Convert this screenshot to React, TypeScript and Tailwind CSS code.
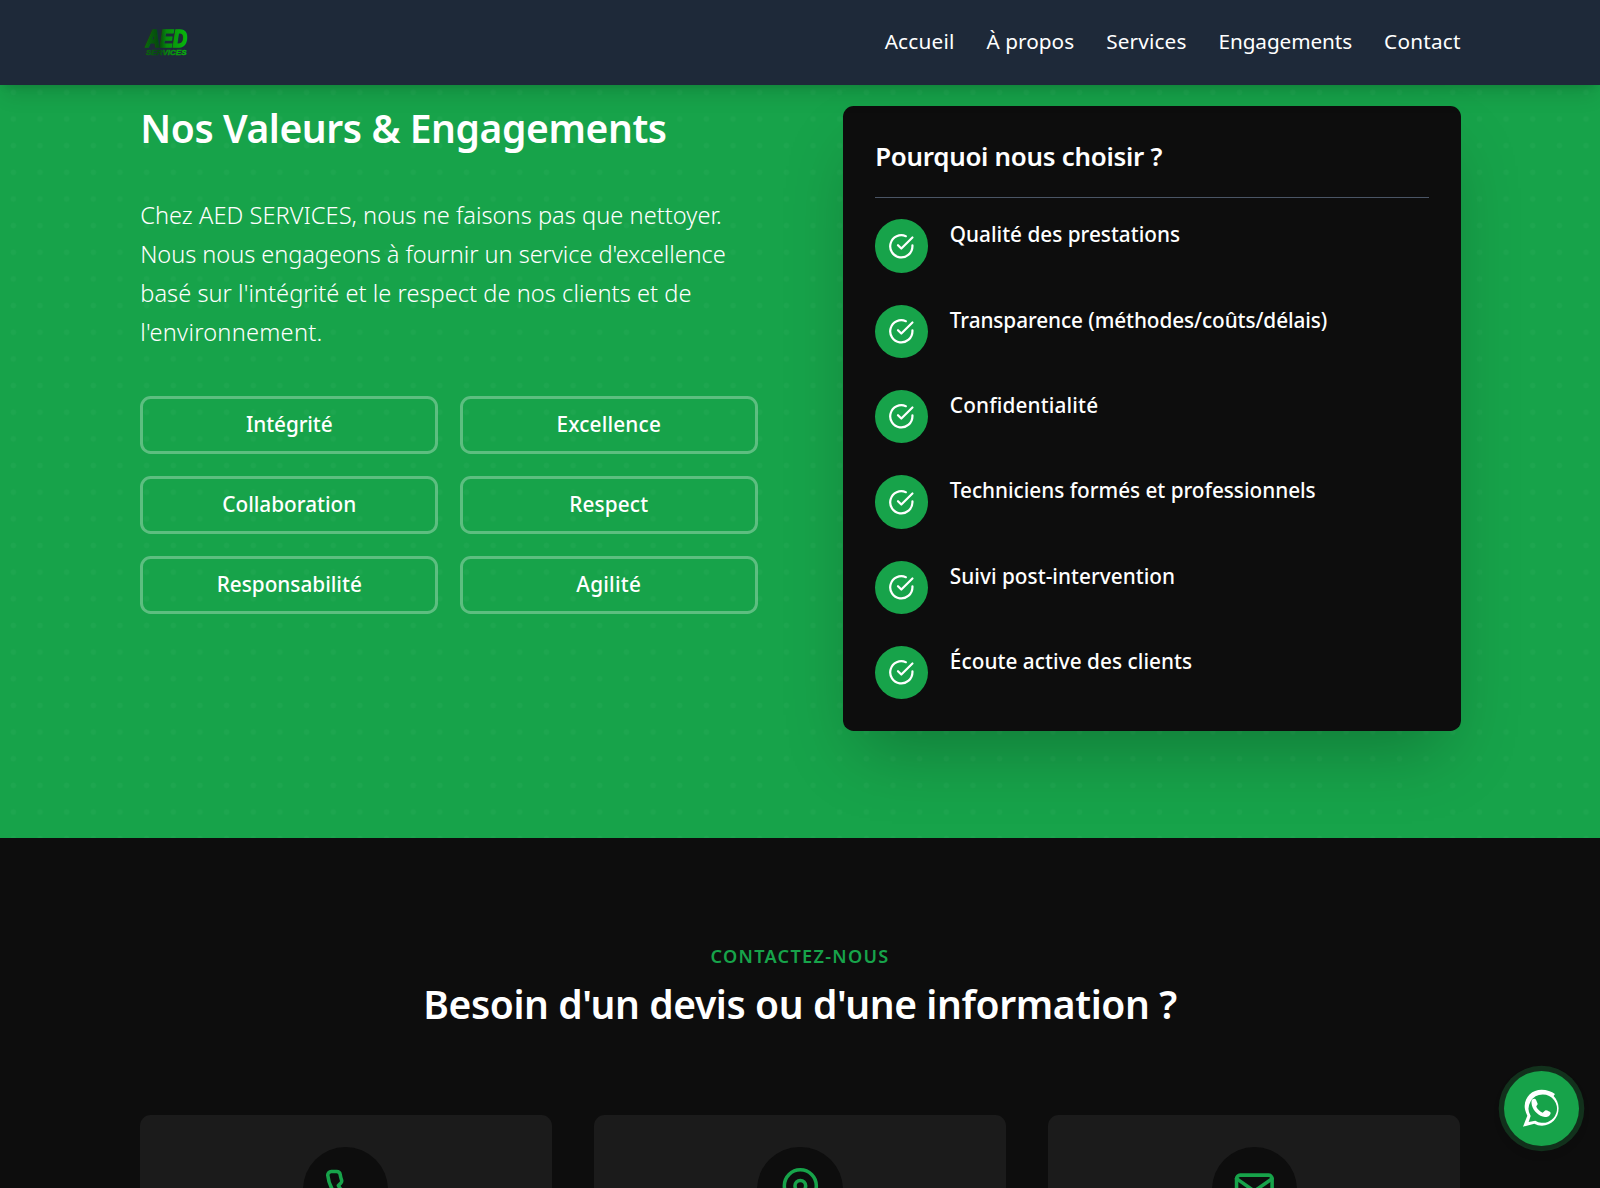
import { FiCheckCircle, FiMail, FiMapPin, FiPhone } from "react-icons/fi";

const navLinks = [
  { label: "Accueil",     href: "#accueil",     tracking: "tracking-[0.22px]"  },
  { label: "À propos",    href: "#apropos",     tracking: "tracking-[0.02px]"  },
  { label: "Services",    href: "#services",    tracking: "tracking-[0.15px]"  },
  { label: "Engagements", href: "#engagements", tracking: "tracking-[-0.09px]" },
  { label: "Contact",     href: "#contact",     tracking: "tracking-[0.2px]"   },
];

const values = [
  { label: "Intégrité",      tracking: "tracking-[-0.1px]" },
  { label: "Excellence",     tracking: "tracking-[0.18px]" },
  { label: "Collaboration",  tracking: "tracking-normal"   },
  { label: "Respect",        tracking: "tracking-[0.15px]" },
  { label: "Responsabilité", tracking: "tracking-normal"   },
  { label: "Agilité",        tracking: "tracking-[0.25px]" },
];

const reasons = [
  { label: "Qualité des prestations",             tracking: "tracking-normal"    },
  { label: "Transparence (méthodes/coûts/délais)", tracking: "tracking-[-0.08px]" },
  { label: "Confidentialité",                     tracking: "tracking-[0.15px]"  },
  { label: "Techniciens formés et professionnels", tracking: "tracking-[-0.02px]" },
  { label: "Suivi post-intervention",             tracking: "tracking-[0.03px]"  },
  { label: "Écoute active des clients",           tracking: "tracking-[0.05px]"  },
];

const contacts = [
  { Icon: FiPhone,  label: "Téléphone" },
  { Icon: FiMapPin, label: "Adresse"   },
  { Icon: FiMail,   label: "Email"     },
];

function Logo() {
  return (
    <svg viewBox="0 0 44 28" className="ml-1 w-11 h-7 overflow-visible" aria-label="AED Services">
      <defs>
        <linearGradient id="logo" gradientUnits="userSpaceOnUse" x1="2" y1="0" x2="43" y2="0">
          <stop offset="0" stopColor="#07680b" />
          <stop offset="0.32" stopColor="#05480c" />
          <stop offset="0.5" stopColor="#078a0b" />
          <stop offset="1" stopColor="#08b80a" />
        </linearGradient>
      </defs>
      <g fill="url(#logo)" stroke="url(#logo)" fontFamily="Liberation Sans, Arial, sans-serif" fontWeight="700" fontStyle="italic">
        <text x="2" y="19" fontSize="23" strokeWidth="1.6" textLength="41" lengthAdjust="spacingAndGlyphs">AED</text>
        <text x="2" y="26.6" fontSize="7.6" strokeWidth="0.4" textLength="40.5" lengthAdjust="spacingAndGlyphs">SERVICES</text>
      </g>
    </svg>
  );
}

function WhatsappIcon() {
  return (
    <svg viewBox="186 148 112 116" fill="currentColor" className="w-[37.3px] h-[38.7px] -ml-[3px]">
      <path
        fillRule="evenodd"
        d="M189 261L202 228C196 216 194 207 194 199C195 170 217 150 245 150C260 150 275 155 285 163L281 169C290 178 296 191 296 206C296 236 274 258 246 258C237 258 230 256 223 252ZM248.5 164.5A42.5 42.5 0 0 0 212 229L206 247L226 243A42.5 42.5 0 1 0 248.5 164.5Z"
      />
      <path d="M216 180C220 176 226 176 228 180L233 192C233 196 229 198 229 201C233 209 240 216 248 219C252 217 254 212 258 212C263 213 270 216 272 219C272 228 262 233 255 232C236 229 221 214 216 198C214 190 214 184 216 180Z" />
    </svg>
  );
}

function Header() {
  return (
    <header className="relative z-10 h-[85px] bg-gray-800 shadow-[0_13px_20px_-4px_rgba(0,0,0,0.12),0_5px_8px_-4px_rgba(0,0,0,0.12)]">
      <div className="mx-auto flex h-full w-[1320px] items-center justify-between pb-[2px]">
        <Logo />
        <nav className="-mr-[0.6px] flex gap-8 pb-[2px]">
          {navLinks.map((l) => (
            <a key={l.label} href={l.href} className={`text-[20.75px] leading-8 text-white ${l.tracking}`}>
              {l.label}
            </a>
          ))}
        </nav>
      </div>
    </header>
  );
}

function Commitments() {
  return (
    <section
      id="engagements"
      className="bg-[#17a34a] bg-[radial-gradient(circle,rgba(255,255,255,0.028)_2.5px,transparent_3.3px)] bg-[size:26.667px_26.667px] bg-[position:0_-6px] pt-[21.4px] pb-[106.6px] pl-px"
    >
      <div className="mx-auto grid w-[1320.6px] grid-cols-2 gap-[85.33px]">
        <div>
          <h2 className="text-[39px] font-semibold leading-[44px] tracking-[-0.4px] text-white">Nos Valeurs &amp; Engagements</h2>
          <p className="mt-[45.2px] whitespace-nowrap text-[23.6px] font-light leading-[39px] text-white">
            <span className="tracking-[0.04px]">Chez AED SERVICES, nous ne faisons pas que nettoyer.</span><br />
            <span className="tracking-[-0.06px]">Nous nous engageons à fournir un service d'excellence</span><br />
            <span className="tracking-[0.04px]">basé sur l'intégrité et le respect de nos clients et de</span><br />
            <span className="tracking-[0.25px]">l'environnement.</span>
          </p>
          <div className="mt-[44px] grid grid-cols-2 gap-[21.33px]">
            {values.map((v) => (
              <div
                key={v.label}
                className={`flex h-[58.67px] items-center justify-center rounded-[10.67px] border-3 border-white/30 pb-px text-[20.75px] font-medium text-white ${v.tracking}`}
              >
                {v.label}
              </div>
            ))}
          </div>
        </div>

        <div className="rounded-[10.67px] bg-[#0d0d0d] p-8 text-white shadow-[0_33px_67px_-16px_rgba(0,0,0,0.25)]">
          <h3 className="border-b border-gray-600 pb-[22.8px] text-[25.9px] font-semibold leading-9 tracking-[-0.27px]">
            Pourquoi nous choisir ?
          </h3>
          <ul className="mt-[21.2px] flex flex-col gap-8">
            {reasons.map((r) => (
              <li key={r.label} className="flex gap-[21.33px]">
                <span className="flex h-[53.33px] w-[53.33px] shrink-0 items-center justify-center rounded-full bg-[#17a34a]">
                  <FiCheckCircle className="h-[26.67px] w-[26.67px]" />
                </span>
                <span className={`text-[20.75px] font-medium leading-[30px] ${r.tracking}`}>{r.label}</span>
              </li>
            ))}
          </ul>
        </div>
      </div>
    </section>
  );
}

function Contact() {
  return (
    <section id="contact" className="pt-[104px]">
      <div className="mx-auto w-[1320px]">
        <p className="text-center text-[18.1px] font-semibold uppercase leading-7 tracking-[1.3px] text-[#17a34a]">Contactez-nous</p>
        <h2 className="mt-2.5 text-center text-[39px] font-semibold leading-[48px] tracking-[-0.39px] text-white">
          Besoin d'un devis ou d'une information ?
        </h2>
        <div className="mt-[87px] grid grid-cols-3 gap-[42.67px]">
          {contacts.map(({ Icon, label }) => (
            <div key={label} aria-label={label} className="flex h-[260px] justify-center rounded-[10.67px] bg-[#1b1b1b] pt-8">
              <span className="flex h-[85.33px] w-[85.33px] items-center justify-center rounded-full bg-[#0d0d0d] text-[#17a34a]">
                <Icon className="h-[42.67px] w-[42.67px]" />
              </span>
            </div>
          ))}
        </div>
      </div>
    </section>
  );
}

export default function App() {
  return (
    <div className="relative h-[1188px] w-full overflow-hidden bg-[#0d0d0d] font-['Noto_Sans',sans-serif]">
      <Header />
      <Commitments />
      <Contact />
      <a
        href="#whatsapp"
        aria-label="WhatsApp"
        className="absolute right-[21px] bottom-[42.5px] flex h-[74.67px] w-[74.67px] items-center justify-center rounded-full bg-[#17a34a] text-white shadow-[0_0_0_5.33px_rgba(34,160,76,0.25),0_5px_12px_rgba(0,0,0,0.15)]"
      >
        <WhatsappIcon />
      </a>
    </div>
  );
}
